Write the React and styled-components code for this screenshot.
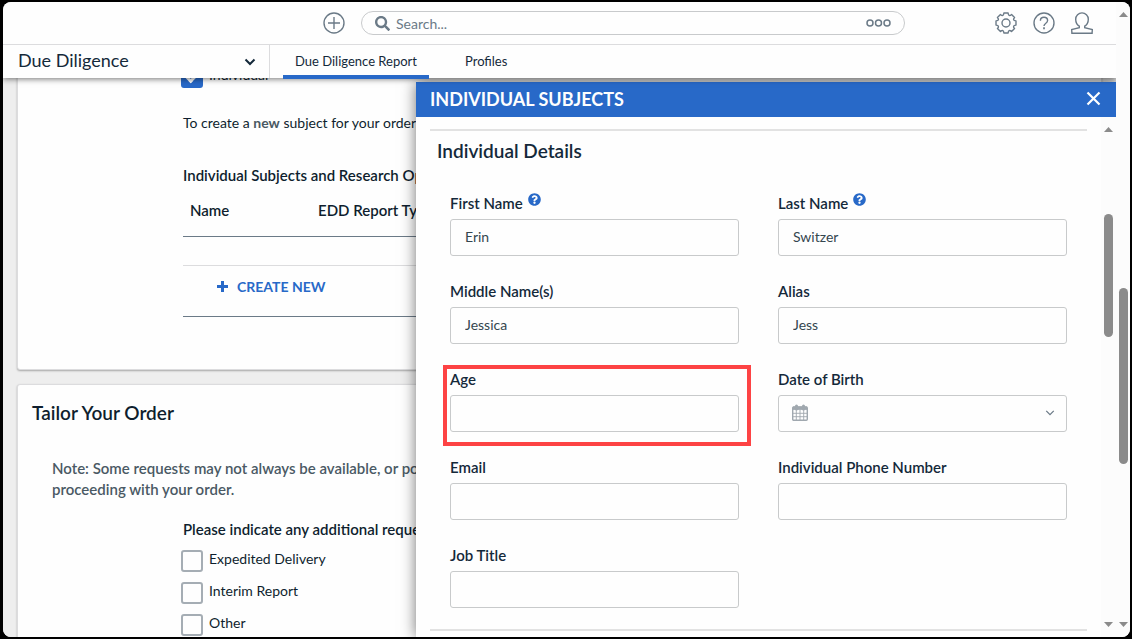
import React from 'react'
import styled, { createGlobalStyle, css } from 'styled-components'
import { FaSearch, FaQuestionCircle } from 'react-icons/fa'

const BLUE = '#2869c8'
const INK = '#14293a'
const STEEL = '#6b7a87'
const LINE = '#dcdcde'

const GlobalStyle = createGlobalStyle`
    * {
        box-sizing: border-box;
    }
    body {
        margin: 0;
        background: #000;
        font-family: Lato, 'Open Sans', sans-serif;
        font-size: 14px;
        color: ${INK};
    }
    button,
    input {
        font: inherit;
        color: inherit;
    }
    button {
        padding: 0;
        border: 0;
        background: none;
        cursor: pointer;
    }
    svg {
        display: block;
        flex: none;
    }
`

const Frame = styled.div`
    height: 100vh;
    padding: 2px 2px 2px 3px;
`

const Window = styled.div`
    display: flex;
    height: 100%;
    overflow: hidden;
    border-radius: 8px;
    background: #fdfdfd;
`

const Main = styled.div`
    flex: 1;
    min-width: 0;
    display: flex;
    flex-direction: column;
    overflow: hidden;
`

const Header = styled.header`
    position: relative;
    z-index: 2;
    background: #fefefe;
    box-shadow: 0 1px 6px rgba(0, 0, 0, 0.55);
`

const TopBar = styled.div`
    display: flex;
    align-items: center;
    height: 43px;
    padding: 0 23px 0 320px;
    border-bottom: 1px solid ${LINE};
    color: ${STEEL};
`

const IconButton = styled.button`
    color: inherit;
`

const SearchBox = styled.label`
    flex: 1;
    display: flex;
    align-items: center;
    gap: 6px;
    height: 24px;
    margin: 0 90px 0 16px;
    padding: 0 13px;
    border: 1px solid #c8cacc;
    border-radius: 12px;
`

const SearchInput = styled.input`
    flex: 1;
    min-width: 0;
    padding: 0;
    border: 0;
    outline: 0;
    background: none;
    &::placeholder {
        color: ${STEEL};
        opacity: 1;
    }
`

const Tools = styled.div`
    display: flex;
    gap: 16px;
`

const Nav = styled.nav`
    display: flex;
    height: 33px;
`

const ModuleButton = styled.button`
    display: flex;
    align-items: center;
    justify-content: space-between;
    width: 267px;
    padding: 0 13px 4px 15px;
    border-right: 1px solid ${LINE};
    font-size: 18px;
    svg {
        margin-top: 4px;
    }
`

const Tab = styled.a`
    display: flex;
    align-items: center;
    height: 34px;
    margin-left: 13px;
    padding: 1px 12px 0;
    border-bottom: 4px solid ${(p) => (p.$active ? BLUE : 'transparent')};
    font-size: 13px;
    color: inherit;
    text-decoration: none;
    & + & {
        margin-left: 24px;
    }
`

const Body = styled.main`
    position: relative;
    flex: 1;
    min-height: 0;
    overflow: hidden;
    background: #eee;
`

// the page is scrolled so that the first row is half under the header
const Scrolled = styled.div`
    display: flex;
    flex-direction: column;
    gap: 14px;
    margin: -13px 14px 0;
    color: #0f1e2e;
`

const Card = styled.section`
    padding-bottom: 52px;
    border: 1px solid ${LINE};
    border-radius: 3px;
    background: #fefefe;
    box-shadow: 0 1px 2px rgba(0, 0, 0, 0.3);
`

const Indented = styled.div`
    padding-left: 165px;
`

const CheckLabel = styled.label`
    display: flex;
    gap: 6px;
    margin: 0 0 10px -2px;
    line-height: 18px;
`

const CheckInput = styled.input`
    appearance: none;
    display: flex;
    justify-content: center;
    width: 22px;
    height: 22px;
    margin: 0;
    border: 2px solid #a5adb4;
    border-radius: 3px;
    background: #fefefe;
    &:checked {
        border-color: ${BLUE};
        background: ${BLUE};
    }
    &:checked::after {
        content: '';
        width: 6px;
        height: 11px;
        border: solid #fefefe;
        border-width: 0 3px 3px 0;
        transform: rotate(45deg);
    }
`

const Text = styled.p`
    margin: 25px 0 32px;
    line-height: 20px;
    b {
        color: #4a5964;
    }
`

const Strong = styled.h3`
    margin: 0;
    font-size: 15px;
    font-weight: 600;
    line-height: 20px;
`

const Table = styled.table`
    width: 100%;
    border-collapse: collapse;
    th {
        height: 51px;
        padding: 0 7px;
        border-bottom: 1px solid ${STEEL};
        font-size: 15px;
        font-weight: 600;
        text-align: left;
    }
    th:first-child {
        width: 128px;
    }
    td {
        height: 29px;
        padding: 0;
        border-bottom: 1px solid ${LINE};
    }
    tfoot td {
        height: 51px;
        padding: 0 34px 8px;
        border-bottom: 1px solid ${STEEL};
    }
`

const CreateButton = styled.button`
    display: flex;
    align-items: center;
    gap: 9px;
    color: ${BLUE};
    font-weight: 700;
`

const CardTitle = styled.h2`
    margin: 0;
    padding: 16px 14px 0;
    font-size: 19px;
    font-weight: 600;
    line-height: 24px;
`

const Note = styled.p`
    margin: 0;
    padding: 33px 34px 19px;
    color: #4a5964;
    font-size: 15px;
    font-weight: 600;
    line-height: 21px;
`

const Options = styled(Indented)`
    ${Strong} {
        margin-bottom: 11px;
    }
`

const Drawer = styled.aside`
    position: absolute;
    top: 4px;
    right: 0;
    bottom: 0;
    left: 413px;
    display: flex;
    flex-direction: column;
    background: #fefefe;
    box-shadow: 0 0 14px rgba(0, 0, 0, 0.55);
`

const DrawerHeader = styled.div`
    display: flex;
    align-items: center;
    justify-content: space-between;
    height: 35px;
    padding: 0 15px 2px 14px;
    background: ${BLUE};
    color: #fefefe;
`

const DrawerTitle = styled.h2`
    margin: 0;
    font-size: 18px;
    font-weight: 700;
`

const DrawerBody = styled.div`
    flex: 1;
    min-height: 0;
    display: flex;
`

const Form = styled.form`
    flex: 1;
    min-width: 0;
    overflow: hidden;
    padding: 12px 14px 0;
`

const FormSection = styled.section`
    border: solid #e2e2e2;
    border-width: 2px 0;
    padding: 8px 0 21px;
`

const SectionTitle = styled.h3`
    margin: 0 7px 32px;
    font-size: 19px;
    font-weight: 600;
    line-height: 24px;
`

const Fields = styled.div`
    display: grid;
    grid-template-columns: 1fr 1fr;
    gap: 27px 39px;
    padding: 0 20px;
`

const Field = styled.div`
    position: relative;
    display: flex;
    flex-direction: column;
    gap: 8px;
    ${(p) =>
        p.$marked &&
        css`
            &::after {
                content: '';
                position: absolute;
                inset: -6px -12px -14px -7px;
                border: 4px solid #fd4344;
                pointer-events: none;
            }
        `}
`

const LabelRow = styled.div`
    display: flex;
    gap: 5px;
    height: 16px;
    line-height: 16px;
    font-size: 15px;
    font-weight: 600;
    color: ${BLUE};
    label {
        color: ${INK};
    }
    svg {
        margin-top: -2px;
    }
`

const control = css`
    width: 100%;
    height: 37px;
    border: 1px solid #c8cacb;
    border-radius: 3px;
    background: #fefefe;
    color: #34464f;
`

const TextInput = styled.input`
    ${control}
    padding: 0 14px 2px;
`

const DateBox = styled.div`
    ${control}
    display: flex;
    align-items: center;
    padding: 0 11px 2px 13px;
    color: ${STEEL};
    input {
        flex: 1;
        min-width: 0;
        border: 0;
        outline: 0;
        background: none;
    }
`

const ScrollColumn = styled.div`
    display: flex;
    flex-direction: column;
    align-items: center;
    width: ${(p) => p.$width}px;
    padding: 10px 0;
    background: #fcfcfc;
    color: #8b8b8b;
`

const Gap = styled.div`
    flex: ${(p) => p.$grow} 0 0;
`

const Thumb = styled.div`
    flex: ${(p) => p.$grow} 0 0;
    width: 9px;
    border-radius: 5px;
    background: #8b8b8b;
`

const Arrow = ({ down }) => (
    <svg width="9" height="5" viewBox="0 0 9 5" fill="currentColor">
        <path d={down ? 'M0 0h9L4.5 5z' : 'M4.5 0L9 5H0z'} />
    </svg>
)

const Scrollbar = ({ width, before, thumb, after }) => (
    <ScrollColumn $width={width} aria-hidden="true">
        <Arrow />
        <Gap $grow={before} />
        <Thumb $grow={thumb} />
        <Gap $grow={after} />
        <Arrow down />
    </ScrollColumn>
)

const Chevron = ({ size, weight }) => (
    <svg width={size} height={size} viewBox="0 0 12 12" fill="none" stroke="currentColor" strokeWidth={weight}>
        <path d="M1.5 3.5L6 8l4.5-4.5" />
    </svg>
)

const PlusCircleIcon = () => (
    <svg width="22" height="22" viewBox="0 0 22 22" fill="none" stroke="currentColor" strokeWidth="1.4">
        <circle cx="11" cy="11" r="10" />
        <path d="M11 5v12M5 11h12" />
    </svg>
)

const DotsIcon = () => (
    <svg width="25" height="8" viewBox="0 0 25 8" fill="none" stroke="currentColor" strokeWidth="1.5">
        <circle cx="4" cy="4" r="3" />
        <circle cx="12.5" cy="4" r="3" />
        <circle cx="21" cy="4" r="3" />
    </svg>
)

const polar = (radius, degrees) => {
    const a = (degrees * Math.PI) / 180
    return `${(11 + radius * Math.cos(a)).toFixed(2)} ${(11 + radius * Math.sin(a)).toFixed(2)}`
}

// eight blunt teeth with a rounded notch between each pair
const gearPath =
    [0, 45, 90, 135, 180, 225, 270, 315]
        .map((d, i) => `${i ? 'L' : 'M'}${polar(10.2, d - 12)}L${polar(10.2, d + 12)}Q${polar(6.4, d + 22.5)} ${polar(10.2, d + 33)}`)
        .join('') + 'z'

const GearIcon = () => (
    <svg width="22" height="22" viewBox="0 0 22 22" fill="none" stroke="currentColor" strokeWidth="1.4" strokeLinejoin="round">
        <path d={gearPath} />
        <circle cx="11" cy="11" r="4" />
    </svg>
)

const HelpIcon = () => (
    <svg width="22" height="22" viewBox="0 0 22 22" fill="none" stroke="currentColor" strokeWidth="1.4">
        <circle cx="11" cy="11" r="10" />
        <path d="M7.4 8.8c0-2.1 1.5-3.5 3.6-3.5s3.6 1.3 3.6 3.2c0 1.5-.9 2.2-2 3-1 .7-1.6 1.2-1.6 2.6" />
        <path d="M11 15.3v1.9" strokeWidth="1.7" />
    </svg>
)

const UserIcon = () => (
    <svg width="22" height="22" viewBox="0 0 22 22" fill="none" stroke="currentColor" strokeWidth="1.4">
        <path d="M8.3 14.2C5.8 12.7 4.7 10 4.7 7.2a6.3 6.3 0 0 1 12.6 0c0 2.800-1.100 5.500-3.600 7v1.500l7.600 1.900-.2 3.600H.9l-.2-3.600 7.600-1.900z" />
    </svg>
)

const CloseIcon = () => (
    <svg width="15" height="15" viewBox="0 0 15 15" fill="none" stroke="currentColor" strokeWidth="2.2">
        <path d="M1.5 1.5l12 12M13.5 1.5l-12 12" />
    </svg>
)

const PlusIcon = () => (
    <svg width="11" height="11" viewBox="0 0 11 11" fill="currentColor">
        <path d="M4 0h3v4h4v3H7v4H4V7H0V4h4z" />
    </svg>
)

const CalendarIcon = () => (
    <svg width="16" height="17" viewBox="0 0 16 17" fill="none" stroke="#a0a8af">
        <rect x=".7" y="3" width="14.6" height="13.2" rx="1" strokeWidth="1.4" />
        <path d="M1 4.2h14" strokeWidth="3.4" />
        <path d="M4.5 2v3M11.500 2v3" strokeWidth="3" strokeLinecap="round" />
        <path d="M4.300 6v10M8 6v10M11.700 6v10M1 9.300h14M1 12.700h14" strokeWidth=".9" />
    </svg>
)

const fields = [
    { id: 'firstName', label: 'First Name', value: 'Erin', help: true },
    { id: 'lastName', label: 'Last Name', value: 'Switzer', help: true },
    { id: 'middleName', label: 'Middle Name(s)', value: 'Jessica' },
    { id: 'alias', label: 'Alias', value: 'Jess' },
    { id: 'age', label: 'Age', marked: true },
    { id: 'birth', label: 'Date of Birth', date: true },
    { id: 'email', label: 'Email' },
    { id: 'phone', label: 'Individual Phone Number' },
    { id: 'job', label: 'Job Title' },
]

const options = ['Expedited Delivery', 'Interim Report', 'Other']

const FormField = ({ field }) => (
    <Field $marked={field.marked}>
        <LabelRow>
            <label htmlFor={field.id}>{field.label}</label>
            {field.help ? <FaQuestionCircle size={13} /> : null}
        </LabelRow>
        {field.date ? (
            <DateBox>
                <CalendarIcon />
                <input id={field.id} type="text" />
                <IconButton type="button" aria-label="Open calendar">
                    <Chevron size={10} weight={1.5} />
                </IconButton>
            </DateBox>
        ) : (
            <TextInput id={field.id} type="text" defaultValue={field.value} />
        )}
    </Field>
)

const AppHeader = () => (
    <Header>
        <TopBar>
            <IconButton aria-label="Add">
                <PlusCircleIcon />
            </IconButton>
            <SearchBox>
                <FaSearch size={15} />
                <SearchInput type="text" placeholder="Search..." aria-label="Search" />
                <IconButton aria-label="More">
                    <DotsIcon />
                </IconButton>
            </SearchBox>
            <Tools>
                <IconButton aria-label="Settings">
                    <GearIcon />
                </IconButton>
                <IconButton aria-label="Help">
                    <HelpIcon />
                </IconButton>
                <IconButton aria-label="Account">
                    <UserIcon />
                </IconButton>
            </Tools>
        </TopBar>
        <Nav>
            <ModuleButton>
                Due Diligence
                <Chevron size={12} weight={2} />
            </ModuleButton>
            <Tab href="#report" $active>
                Due Diligence Report
            </Tab>
            <Tab href="#profiles">Profiles</Tab>
        </Nav>
    </Header>
)

const SubjectsCard = () => (
    <Card>
        <Indented>
            <CheckLabel>
                <CheckInput type="checkbox" defaultChecked />
                Individual
            </CheckLabel>
            <Text>
                To create a <b>new</b> subject for your order, click Create New.
            </Text>
            <Strong>Individual Subjects and Research Options</Strong>
            <Table>
                <thead>
                    <tr>
                        <th>Name</th>
                        <th>EDD Report Type</th>
                    </tr>
                </thead>
                <tbody>
                    <tr>
                        <td colSpan={2} />
                    </tr>
                </tbody>
                <tfoot>
                    <tr>
                        <td colSpan={2}>
                            <CreateButton>
                                <PlusIcon />
                                CREATE NEW
                            </CreateButton>
                        </td>
                    </tr>
                </tfoot>
            </Table>
        </Indented>
    </Card>
)

const TailorCard = () => (
    <Card>
        <CardTitle>Tailor Your Order</CardTitle>
        <Note>
            Note: Some requests may not always be available, or possible.
            <br />
            proceeding with your order.
        </Note>
        <Options>
            <Strong>Please indicate any additional requests</Strong>
            {options.map((name) => (
                <CheckLabel key={name}>
                    <CheckInput type="checkbox" />
                    {name}
                </CheckLabel>
            ))}
        </Options>
    </Card>
)

const SubjectDrawer = () => (
    <Drawer>
        <DrawerHeader>
            <DrawerTitle>INDIVIDUAL SUBJECTS</DrawerTitle>
            <IconButton aria-label="Close">
                <CloseIcon />
            </IconButton>
        </DrawerHeader>
        <DrawerBody>
            <Form>
                <FormSection>
                    <SectionTitle>Individual Details</SectionTitle>
                    <Fields>
                        {fields.map((field) => (
                            <FormField key={field.id} field={field} />
                        ))}
                    </Fields>
                </FormSection>
            </Form>
            <Scrollbar width={15} before={82} thumb={123} after={285} />
        </DrawerBody>
    </Drawer>
)

const App = () => (
    <Frame>
        <GlobalStyle />
        <Window>
            <Main>
                <AppHeader />
                <Body>
                    <Scrolled>
                        <SubjectsCard />
                        <TailorCard />
                    </Scrolled>
                    <SubjectDrawer />
                </Body>
            </Main>
            <Scrollbar width={14} before={271} thumb={176} after={158} />
        </Window>
    </Frame>
)

export default App
